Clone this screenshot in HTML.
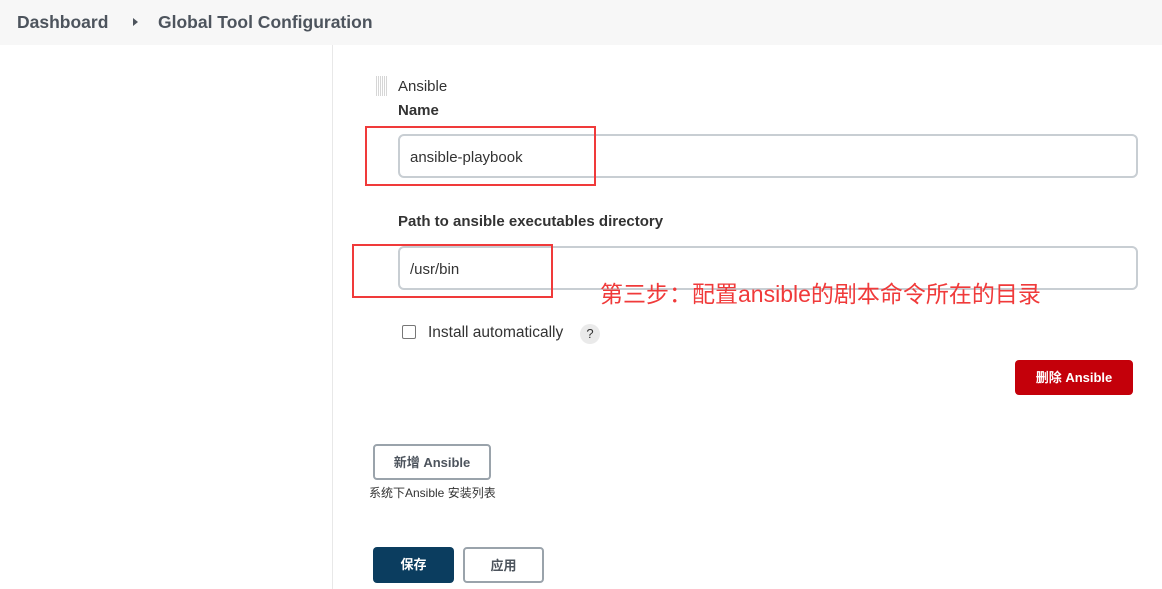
<!DOCTYPE html>
<html><head><meta charset="utf-8"><style>
body{margin:0;width:1162px;height:589px;overflow:hidden;background:#fff;font-family:"Liberation Sans","Noto Sans CJK SC",sans-serif;color:#333;position:relative}
.abs{position:absolute}
.bar{left:0;top:0;width:1162px;height:45px;background:#f7f7f7}
.bc{top:12px;font-size:17.5px;font-weight:bold;color:#4d545d}
.input{border:2px solid #c8ced3;border-radius:6px;background:#fff;font-size:15px;color:#333;box-sizing:border-box;padding-left:10px;padding-top:4px;line-height:36px}
.red{border:2px solid #f03a3a;box-sizing:border-box}
.btn{border:2px solid #9aa3ab;border-radius:4px;box-sizing:border-box;font-size:13px;font-weight:bold;text-align:center;color:#4d545d;background:#fff}
</style></head><body>
<div class="abs bar"></div>
<div class="abs bc" style="left:17px">Dashboard</div>
<div class="abs" style="left:133px;top:18px;width:0;height:0;border-left:5px solid #4d545d;border-top:4px solid transparent;border-bottom:4px solid transparent"></div>
<div class="abs bc" style="left:158px">Global Tool Configuration</div>
<div class="abs" style="left:332px;top:45px;width:1px;height:544px;background:#e8e8e8"></div>
<div class="abs" style="left:376px;top:76px;width:12px;height:20px;background:repeating-linear-gradient(90deg,#ccc 0 1px,transparent 1px 2px),#fff;opacity:.8"></div>
<div class="abs" style="left:398px;top:78px;font-size:15px">Ansible</div>
<div class="abs" style="left:398px;top:102px;font-size:15px;font-weight:bold">Name</div>
<div class="abs input" style="left:398px;top:134px;width:740px;height:44px">ansible-playbook</div>
<div class="abs red" style="left:365px;top:126px;width:231px;height:60px"></div>
<div class="abs" style="left:398px;top:213px;font-size:15px;font-weight:bold">Path to ansible executables directory</div>
<div class="abs input" style="left:398px;top:246px;width:740px;height:44px">/usr/bin</div>
<div class="abs red" style="left:352px;top:244px;width:201px;height:54px"></div>
<div class="abs" style="left:600px;top:275px;font-size:23px;color:#f03a3a">第三步：配置ansible的剧本命令所在的目录</div>
<div class="abs" style="left:402px;top:325px;width:12px;height:12px;border:1px solid #777;border-radius:2px"></div>
<div class="abs" style="left:428px;top:324px;font-size:15.5px">Install automatically</div>
<div class="abs" style="left:580px;top:324px;width:20px;height:20px;border-radius:50%;background:#eaeaea;text-align:center;font-size:13px;line-height:20px">?</div>
<div class="abs" style="left:1015px;top:360px;width:118px;height:35px;background:#c4000a;border-radius:4px;color:#fff;font-size:13px;font-weight:bold;text-align:center;line-height:35px">删除 Ansible</div>
<div class="abs btn" style="left:373px;top:444px;width:118px;height:36px;line-height:34px">新增 Ansible</div>
<div class="abs" style="left:369px;top:484px;font-size:12px">系统下Ansible 安装列表</div>
<div class="abs btn" style="left:373px;top:547px;width:81px;height:36px;line-height:36px;background:#0b3d5f;border:none;color:#fff">保存</div>
<div class="abs btn" style="left:463px;top:547px;width:81px;height:36px;line-height:34px">应用</div>
</body></html>
